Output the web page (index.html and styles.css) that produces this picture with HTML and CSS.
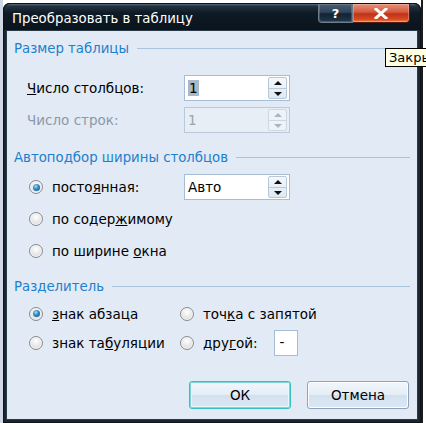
FILE: index.html
```html
<!DOCTYPE html>
<html lang="ru">
<head>
<meta charset="utf-8">
<title>Преобразовать в таблицу</title>
<link rel="stylesheet" href="styles.css">
</head>
<body>
<div class="desk">
  <div class="window">
    <div class="titlebar">
      <span class="title">Преобразовать в таблицу</span>
      <div class="caption-btns">
        <span class="cbtn help">?</span>
        <span class="cbtn close"><svg width="14" height="11" viewBox="0 0 14 11"><path d="M2 1 L12 10 M12 1 L2 10" stroke="#fff" stroke-width="3" stroke-linecap="square"/></svg></span>
      </div>
    </div>
    <div class="client">
      <div class="legend legend-1"><span>Размер таблицы</span></div>
      <div class="row row-cols">
        <span class="label"><u>Ч</u>исло столбцов:</span>
        <div class="spin">
          <span class="value"><span class="sel">1</span></span>
          <span class="arrows"><span class="arr up"></span><span class="arr down"></span></span>
        </div>
      </div>
      <div class="row row-rows disabled">
        <span class="label">Число строк:</span>
        <div class="spin">
          <span class="value">1</span>
          <span class="arrows"><span class="arr up"></span><span class="arr down"></span></span>
        </div>
      </div>

      <div class="legend legend-2"><span>Автоподбор ширины столбцов</span></div>
      <div class="row radio-row first">
        <span class="opt"><span class="radio on"></span><span>посто<u>я</u>нная:</span></span>
        <div class="spin">
          <span class="value">Авто</span>
          <span class="arrows"><span class="arr up"></span><span class="arr down"></span></span>
        </div>
      </div>
      <div class="row radio-row">
        <span class="opt"><span class="radio"></span><span>по содер<u>ж</u>имому</span></span>
      </div>
      <div class="row radio-row">
        <span class="opt"><span class="radio"></span><span>по ширине <u>о</u>кна</span></span>
      </div>

      <div class="legend legend-3"><span>Разделитель</span></div>
      <div class="sep-grid">
        <span class="opt"><span class="radio on"></span><span><u>з</u>нак абзаца</span></span>
        <span class="opt"><span class="radio"></span><span>точ<u>к</u>а с запятой</span></span>
        <span class="opt"><span class="radio"></span><span>знак та<u>б</u>уляции</span></span>
        <span class="opt other"><span class="radio"></span><span>дру<u>г</u>ой:</span><span class="small-input">-</span></span>
      </div>

      <div class="actions">
        <span class="btn default">ОК</span>
        <span class="btn">Отмена</span>
      </div>
    </div>
  </div>
  <div class="tooltip">Закрыть</div>
</div>
</body>
</html>
```

FILE: styles.css
```css
* { box-sizing: border-box; }
html, body { margin: 0; padding: 0; }
body {
  width: 426px;
  height: 423px;
  overflow: hidden;
  background: #ffffff;
  font-family: "DejaVu Sans", "Noto Sans", sans-serif;
  font-size: 13.5px;
  color: #000;
}
.desk {
  position: relative;
  height: 423px;
  padding: 3px 5px 0 3px;
  overflow: hidden;
  background: linear-gradient(90deg, #cfd8e4 0, #cfd8e4 3px, #fff 3px, #fff 421px, #1b1b1b 421px, #1b1b1b 423px, #fff 423px);
}
.window {
  height: 420px;
  background: #1a2733;
  border-radius: 7px 7px 0 0;
  padding: 0 3px 3px 3px;
  display: flex;
  flex-direction: column;
  box-shadow: inset 0 0 0 1px #0d151c;
}
.titlebar {
  height: 27px;
  margin: 0 -3px;
  padding: 0 8px 0 8px;
  display: flex;
  justify-content: space-between;
  align-items: flex-start;
  border-radius: 7px 7px 0 0;
  background: linear-gradient(#5a6b7b 0, #243442 2px, #0e1a25 9px, #0a141d 100%);
  border: 1px solid #0b1218;
  border-bottom: none;
}
.title {
  color: #fff;
  font-size: 13.3px;
  line-height: 16px;
  padding-top: 7px;
}
.caption-btns {
  display: flex;
  margin-right: 2px;
}
.cbtn {
  height: 19px;
  display: flex;
  align-items: center;
  justify-content: center;
  border: 1px solid #6d7c8a;
  border-top: none;
}
.help {
  width: 35px;
  color: #fff;
  font-weight: bold;
  font-size: 13px;
  border-radius: 0 0 0 4px;
  background: linear-gradient(#4a5d71 0, #30445a 45%, #122333 55%, #21374d 100%);
  box-shadow: inset 0 0 0 1px rgba(255,255,255,0.18);
}
.close {
  width: 57px;
  border-color: #5a1a10;
  border-left: none;
  border-radius: 0 0 4px 0;
  background: linear-gradient(#e6937c 0, #d45a3e 45%, #c03218 55%, #d54a23 85%, #eb8a4c 100%);
  box-shadow: inset 0 0 0 1px rgba(255,210,190,0.35);
}
.client {
  flex: 1;
  background: #e1eaf5;
  border: 1px solid #2a3a48;
  padding: 9px 7px 0 7px;
  display: flex;
  flex-direction: column;
}
.legend {
  display: flex;
  align-items: center;
  height: 16px;
  color: #1c80cc;
  font-size: 13.3px;
}
.legend::after {
  content: "";
  flex: 1;
  height: 1px;
  background: #a9c3da;
  margin-left: 8px;
}
.legend-2 { margin-top: 14px; }
.legend-3 { margin-top: 11px; }
.row {
  display: flex;
  align-items: center;
  height: 30px;
  padding-left: 13px;
}
.row-cols { margin-top: 17px; }
.row-rows { margin-top: 2px; }
.label { width: 157px; }
.disabled .label { color: #8d99a5; }
.spin {
  width: 106px;
  height: 26px;
  border: 1px solid #a7bdd3;
  background: #fff;
  display: flex;
  align-items: center;
  justify-content: space-between;
  padding: 0 2px 0 3px;
}
.disabled .spin { background: #e8eef5; border-color: #b9c9d9; color: #9aa5b0; }
.value { line-height: 17px; }
.sel { background: #a9b9c9; padding: 0 1px; }
.arrows {
  width: 19px;
  height: 22px;
  display: flex;
  flex-direction: column;
  border: 1px solid #b8c8d8;
  border-radius: 2px;
  background: linear-gradient(#f4f8fb, #dfe8f1);
}
.arr {
  flex: 1;
  position: relative;
}
.arr.up { border-bottom: 1px solid #b8c8d8; }
.arr::after {
  content: "";
  position: absolute;
  left: 5px;
  top: 3px;
  border-left: 4px solid transparent;
  border-right: 4px solid transparent;
}
.arr.up::after { border-bottom: 4px solid #111; }
.arr.down::after { border-top: 4px solid #111; }
.disabled .arrows { background: #eef3f8; border-color: #ccd8e4; }
.disabled .arr.up { border-bottom-color: #ccd8e4; }
.disabled .arr.up::after { border-bottom-color: #aab6c2; }
.disabled .arr.down::after { border-top-color: #aab6c2; }

.radio-row { height: 32px; padding-left: 15px; }
.radio-row.first { margin-top: 6px; }
.radio-row .opt { width: 155px; }
.opt {
  display: flex;
  align-items: center;
  gap: 9px;
}
.radio {
  width: 14px;
  height: 14px;
  border-radius: 50%;
  border: 1px solid #8a8c8e;
  background: radial-gradient(circle at 50% 35%, #ffffff 0, #e6e6e6 55%, #c4c6c8 100%);
  box-shadow: inset 0 0 0 1px #f5f5f5;
  position: relative;
  flex: none;
}
.radio.on::after {
  content: "";
  position: absolute;
  left: 2.5px;
  top: 2.5px;
  width: 7px;
  height: 7px;
  border-radius: 50%;
  background: radial-gradient(circle at 40% 35%, #a8dcf5 0, #2e86c4 45%, #0f4f8a 100%);
}
.sep-grid {
  margin-top: 5px;
  padding-left: 15px;
  display: grid;
  grid-template-columns: 151px auto;
  grid-auto-rows: 29px;
  align-items: center;
}
.other .small-input {
  margin-left: 7px;
  width: 24px;
  height: 26px;
  border: 1px solid #a7bdd3;
  background: #fff;
  padding: 3px 0 0 5px;
}
.actions {
  margin-top: 24px;
  display: flex;
  justify-content: flex-end;
  gap: 16px;
  padding-right: 1px;
}
.btn {
  width: 102px;
  height: 28px;
  display: flex;
  align-items: center;
  justify-content: center;
  border: 1px solid #8ea3ba;
  border-radius: 3px;
  background: linear-gradient(#f1f6fb 0, #e4edf6 50%, #d3e1ef 51%, #dbe7f3 100%);
  box-shadow: inset 0 0 0 1px #fbfdff;
}
.btn.default {
  border-color: #39bfc2;
  box-shadow: inset 0 0 0 1px #7ad8da, inset 0 0 0 2px #eaf7fa;
}
.tooltip {
  position: absolute;
  left: 385px;
  top: 48px;
  height: 19px;
  padding: 1px 3px;
  background: #ffffe1;
  border: 1px solid #000;
  font-size: 13px;
  line-height: 15px;
  white-space: nowrap;
}
```
